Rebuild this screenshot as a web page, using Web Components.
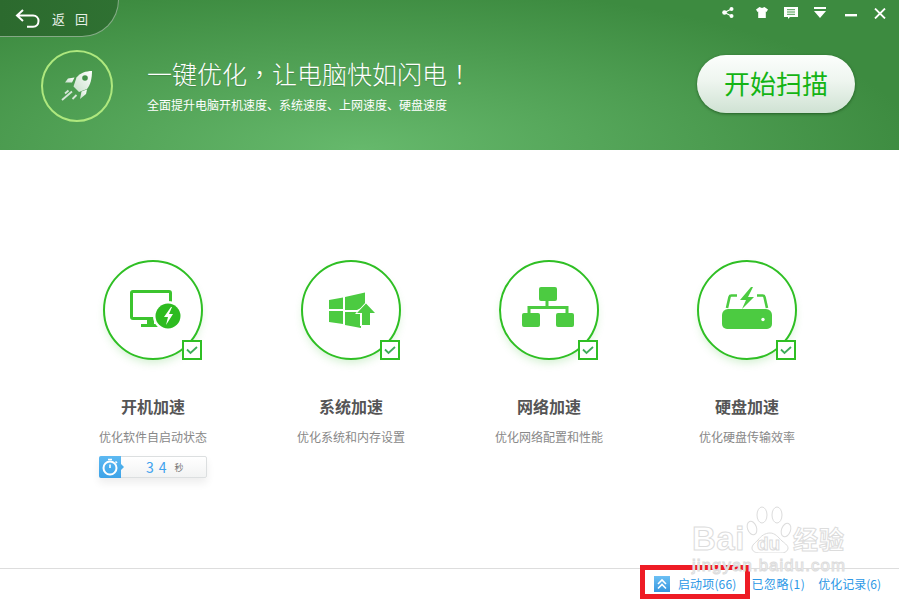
<!DOCTYPE html>
<html lang="zh-CN"><head><meta charset="utf-8"><title>一键优化</title>
<style>
html,body{margin:0;padding:0;height:100%;overflow:hidden;background:#fff;font-family:"Noto Sans CJK SC","Liberation Sans",sans-serif}
</style></head><body>
<opt-app></opt-app>
<script>
const FONT='"Noto Sans CJK SC","Liberation Sans",sans-serif';
const PUNCT='font-family:&quot;Noto Sans CJK TC&quot;,sans-serif';
function def(name,html){
  customElements.define(name,class extends HTMLElement{
    connectedCallback(){
      if(this.shadowRoot)return;
      const r=this.attachShadow({mode:'open'});
      r.innerHTML=typeof html==='function'?html(this):html;
    }
  });
}
const ICONS={
 monitor:`<rect x="28.500" y="31.500" width="39" height="27" rx="1.500" fill="none" stroke="#3cc42e" stroke-width="3"/><path d="M44 59h7v5h5v3H38v-3h6z" fill="#3cc42e"/><circle cx="65" cy="56" r="15" fill="#fff"/><circle cx="65" cy="56" r="12.500" fill="#2dbb20"/><path d="M68 47l-7 10h4l-2 8 7-11h-4l3-7z" fill="#fff"/>`,
 win:`<g fill="#4ccb41"><path d="M28 40l14-2.500V49H28z"/><path d="M28 51h14v13l-14-2z"/><path d="M44 37l20-4.500v14l-6 2.500-2 1H44z"/><path d="M44 52h16v16l-16-3z"/></g><path d="M65 42l11 12h-5v12H59V54h-5z" fill="#fff"/><path d="M65 43.500l9 9.500h-5v12h-8V53h-5z" fill="#4ccb41"/>`,
 net:`<g fill="#4ccb41"><rect x="40" y="27" width="18" height="14" rx="2"/><rect x="23" y="53" width="18" height="14" rx="2"/><rect x="57" y="53" width="18" height="14" rx="2"/></g><path d="M48 41v7M30 53v-5.500h38V53" fill="none" stroke="#4ccb41" stroke-width="3"/>`,
 disk:`<path d="M40 35.500h-5.500a2 2 0 0 0-2 1.500L30 48M60 35.500h5.500a2 2 0 0 1 2 1.500L70 48" fill="none" stroke="#4ccb41" stroke-width="2.600"/><path d="M31 49h38a6 6 0 0 1 6 6v9a5 5 0 0 1-5 5H30a5 5 0 0 1-5-5v-9a6 6 0 0 1 6-6z" fill="#4ccb41"/><circle cx="66" cy="59.500" r="1.700" fill="#fff"/><path d="M54 27L43 40h6l-4 9 12-12h-6l5-10z" fill="#4ccb41"/>`
};
def('top-controls',`<style>:host{display:flex;align-items:flex-start;padding:7px 13px 0 0}svg{display:block;fill:#fff}</style>
<svg width="12" height="11" viewBox="0 0 12 11"><circle cx="2.500" cy="5.500" r="2.300"/><circle cx="9.500" cy="2" r="2"/><circle cx="9.500" cy="9" r="2"/><path d="M2.500 5.500L9.500 2M2.500 5.500L9.500 9" stroke="#fff" stroke-width="1.200"/></svg>
<svg width="12" height="11" viewBox="0 0 12 11" style="margin-left:22px"><path d="M3.500 0L6 1 8.500 0 12 2.500 10.500 5 9.800 4.500V11H2.200V4.500L1.500 5 0 2.500z"/></svg>
<svg width="14" height="12" viewBox="0 0 14 12" style="margin-left:16px"><path d="M0 0h14v10H6L4 12v-2H0z"/><path d="M3 2.700h8M3 5h8M3 7.300h8" stroke="#4a9a4f" stroke-width="1"/></svg>
<svg width="12" height="11" viewBox="0 0 12 11" style="margin-left:16px"><path d="M0 0h12v2H0zM0 4h12L6 11z"/></svg>
<svg width="12" height="3" viewBox="0 0 12 3" style="margin:7px 0 0 19px"><path d="M0 0h12v2.400H0z"/></svg>
<svg width="12" height="11" viewBox="0 0 12 11" style="margin-left:17px;margin-top:1px"><path d="M1 .5l10 10M11 .5l-10 10" stroke="#fff" stroke-width="1.800" fill="none"/></svg>`);
def('back-tab',`<style>:host{display:flex;align-items:center;box-sizing:border-box;width:119px;height:37px;padding-left:15px;gap:12px;
background:linear-gradient(90deg,#2c6a2e,#2f7132);border:solid rgba(255,255,255,.42);border-width:0 1px 1px 0;border-bottom-right-radius:38px;color:#e6efe6;font:13px/1 ${FONT};letter-spacing:10px}
svg{display:block;flex:none}</style>
<svg width="25" height="19" viewBox="0 0 25 19" fill="none" stroke="#fff" stroke-width="2"><path d="M8 1L2 6.500 8 12M2 6.500h16c3.500 0 5.500 2.500 5.500 5.500s-2 5.800-5.500 5.800h-6"/></svg><span><slot></slot></span>`);
def('rocket-badge',`<style>:host{display:block;box-sizing:border-box;width:72px;height:72px;border:2px solid #aee87e;border-radius:50%;flex:none}svg{display:block;margin:-2px}</style>
<svg width="72" height="72" viewBox="0 0 72 72"><defs><linearGradient id="g" x1="1" y1="0" x2="0" y2="1"><stop offset="0" stop-color="#fff"/><stop offset="1" stop-color="#c9dfcc"/></linearGradient></defs>
<g fill="url(#g)"><path d="M51 21C45 21 39 23 35.500 27.500L32.500 36.500 38 42 46 39C49.500 35 51 28 51 21z"/><path d="M33.500 27.500L27 28.500 24 32.500 31 32.500z"/><path d="M46 39.500L45 44 39 49 40.500 41.500z"/></g>
<circle cx="44" cy="28" r="2.800" fill="#43924a"/>
<path d="M31 41.500L21 50M27.500 40.500L24 43.500M35.500 45L31.500 49" stroke="#d6e6d8" stroke-width="1.800" fill="none"/></svg>`);
def('hero-copy',`<style>:host{display:block;color:#fff;margin-left:34px;padding-top:3px}
h1{margin:0;font:300 25px/40px ${FONT};text-shadow:0 1px 1px rgba(0,0,0,.15);white-space:nowrap}
p{margin:2px 0 0;font:12px/20px ${FONT};white-space:nowrap}</style>
<h1><slot name="title"></slot></h1><p><slot name="sub"></slot></p>`);
def('scan-button',`<style>:host{display:flex;align-items:center;justify-content:center;width:158px;height:58px;margin-top:5px;border-radius:29px;background:linear-gradient(#fcfefc,#eef5ef 45%,#cfe2d3);box-shadow:0 1px 3px rgba(0,40,0,.5);color:#14b414;font:26px/1 ${FONT};flex:none;padding-bottom:2px;box-sizing:border-box}</style><slot></slot>`);
def('app-header',`<style>:host{display:block;height:150px;flex:none;background:radial-gradient(ellipse 560px 165px at 40% 100%,#66b96c,rgba(102,185,108,0)),#3d8b40;box-sizing:border-box}
.top{display:flex;justify-content:space-between;align-items:flex-start;height:37px}
.hero{display:flex;align-items:flex-start;padding:13px 44px 0 41px}.sp{flex:1}</style>
<div class="top"><slot name="back"></slot><top-controls></top-controls></div>
<div class="hero"><rocket-badge></rocket-badge><slot name="copy"></slot><div class="sp"></div><slot name="action"></slot></div>`);
def('icon-ring',h=>`<style>:host{display:block;position:relative;box-sizing:border-box;width:100px;height:100px;border:2px solid #2fbf24;border-radius:50%;background:#fff;box-shadow:0 5px 8px -2px rgba(60,190,50,.22)}
svg{display:block;margin:-2px}
.chk{position:absolute;right:-1px;bottom:-2px;box-sizing:border-box;width:20px;height:20px;background:#fff;border:2px solid #2fbf24}
.chk svg{margin:0}</style>
<svg width="100" height="100" viewBox="0 0 100 100">${ICONS[h.getAttribute('icon')]}</svg>
<div class="chk"><svg width="16" height="16" viewBox="0 0 16 16"><path d="M3 7.500l3.500 3.500L13 5" fill="none" stroke="#3dad5a" stroke-width="1.800"/></svg></div>`);
def('timer-pill',`<style>:host{display:flex;align-items:center;box-sizing:border-box;width:108px;height:22px;margin-top:9px;border:1px solid #dcdfe0;border-radius:2px;background:linear-gradient(#fff,#f2f3f3);box-shadow:0 5px 8px rgba(0,0,0,.07);position:relative}
.ic{position:relative;width:22px;height:22px;margin:-1px 0 -1px -1px;background:linear-gradient(#5db9f2,#3da3e8);border-radius:2px 0 0 2px;flex:none}
.ic::after{content:"";position:absolute;right:-3px;top:8px;border-left:3px solid #4aade9;border-top:3px solid transparent;border-bottom:3px solid transparent}
svg{display:block}.n{margin-left:25px;color:#3fa2ee;font:14px/1 ${FONT};letter-spacing:5px;white-space:nowrap}.s{margin-left:3px;color:#777;font:9px/1 ${FONT}}</style>
<div class="ic"><svg width="22" height="22" viewBox="0 0 22 22"><circle cx="11" cy="12" r="6.500" fill="none" stroke="#fff" stroke-width="2"/><path d="M9 3.500h4M11 12V8.500M16.500 5.500l1.500 1.500" stroke="#fff" stroke-width="1.600" fill="none"/></svg></div><span class="n">34</span><span class="s">秒</span>`);
def('feature-card',`<style>:host{display:flex;flex-direction:column;align-items:center;width:198px}
h2{margin:33px 0 0;font:700 16px/26px ${FONT};color:#555;white-space:nowrap}
p{margin:8px 0 0;font:12px/20px ${FONT};color:#888;white-space:nowrap}</style>
<slot name="ring"></slot><h2><slot name="title"></slot></h2><p><slot name="desc"></slot></p><slot name="extra"></slot>`);
def('feature-grid',`<style>:host{display:flex;flex:1;align-items:flex-start;padding:110px 0 0 54px}</style><slot></slot>`);
def('foot-link',`<style>:host{display:flex;align-items:center;color:#2b97e6;font:12px/1 ${FONT};white-space:nowrap}</style><slot></slot>`);
def('app-footer',`<style>:host{display:flex;align-items:center;justify-content:flex-end;box-sizing:border-box;height:31px;flex:none;border-top:1px solid #ddd;padding-right:18px;position:relative}
.up{display:block;margin-right:8px}
.gap{width:15px}.gap2{width:13px}
.mark{position:absolute;left:640px;top:-4px;width:110px;height:34px;box-sizing:border-box;border:5px solid #ee1c25}</style>
<svg class="up" width="16" height="16" viewBox="0 0 16 16"><defs><linearGradient id="b" x1="0" y1="0" x2="0" y2="1"><stop offset="0" stop-color="#6cc0f4"/><stop offset="1" stop-color="#3696de"/></linearGradient></defs><rect width="16" height="16" fill="url(#b)"/><path d="M4 8l4-4 4 4M4 12.500l4-4 4 4" fill="none" stroke="#fff" stroke-width="1.600"/></svg>
<foot-link style="letter-spacing:.15px">启动项(66)</foot-link><div class="gap"></div><foot-link style="letter-spacing:.5px">已忽略(1)</foot-link><div class="gap2"></div><foot-link>优化记录(6)</foot-link><div class="mark"></div>`);
def('baidu-mark',`<style>:host{position:absolute;left:690px;top:500px;width:170px;pointer-events:none;display:block;color:#fff;-webkit-text-stroke:1px #dcdcdc}
.row{display:flex;align-items:flex-start;height:53px;padding-left:2px}
.bai{font:700 33px/38px "Liberation Sans",sans-serif;letter-spacing:.5px;margin-top:20px;width:51px;flex:none}
.paw{position:relative;width:50px;height:53px;flex:none}
.paw svg{display:block;fill:#fff;stroke:#dcdcdc;stroke-width:1}
.du{position:absolute;left:14px;top:34px;font:700 19px/19px "Liberation Sans",sans-serif}
.jw{font:700 25px/30px ${FONT};letter-spacing:1px;margin-top:23px;white-space:nowrap}
.url{margin:2.800px 0 0 2px;font:16.800px/20px "Liberation Sans",sans-serif;letter-spacing:1.100px;white-space:nowrap}</style>
<div class="row"><span class="bai">Bai</span><div class="paw"><svg width="50" height="53" viewBox="0 0 50 53"><ellipse cx="9" cy="28" rx="4.500" ry="7" transform="rotate(-20 9 28)"/><ellipse cx="19" cy="15" rx="5" ry="8"/><ellipse cx="34" cy="15" rx="5" ry="8"/><ellipse cx="43" cy="30" rx="4.500" ry="7" transform="rotate(20 43 30)"/><path d="M27 33c5 0 8 4 12 8 4 3 6 5 6 7 0 3-3 5-7 5H17c-5 0-8-2-8-5 0-3 3-5 6-8 3-4 7-7 12-7z"/></svg><span class="du">du</span></div><span class="jw">经验</span></div>
<div class="url">jingyan.baidu.com</div>`);
def('opt-app',`<style>:host{display:flex;flex-direction:column;width:899px;height:599px;position:relative;overflow:hidden;background:#fff;font-family:${FONT}}</style>
<app-header>
  <back-tab slot="back">返回</back-tab>
  <hero-copy slot="copy"><span slot="title">一键优化<span lang="zh-TW" style="${PUNCT}">，</span>让电脑快如闪电<span lang="zh-TW" style="${PUNCT}">！</span></span><span slot="sub">全面提升电脑开机速度、系统速度、上网速度、硬盘速度</span></hero-copy>
  <scan-button slot="action">开始扫描</scan-button>
</app-header>
<feature-grid>
  <feature-card><icon-ring slot="ring" icon="monitor"></icon-ring><span slot="title">开机加速</span><span slot="desc">优化软件自启动状态</span><timer-pill slot="extra"></timer-pill></feature-card>
  <feature-card><icon-ring slot="ring" icon="win"></icon-ring><span slot="title">系统加速</span><span slot="desc">优化系统和内存设置</span></feature-card>
  <feature-card><icon-ring slot="ring" icon="net"></icon-ring><span slot="title">网络加速</span><span slot="desc">优化网络配置和性能</span></feature-card>
  <feature-card><icon-ring slot="ring" icon="disk"></icon-ring><span slot="title">硬盘加速</span><span slot="desc">优化硬盘传输效率</span></feature-card>
</feature-grid>
<app-footer></app-footer>
<baidu-mark></baidu-mark>`);
</script>
</body></html>
